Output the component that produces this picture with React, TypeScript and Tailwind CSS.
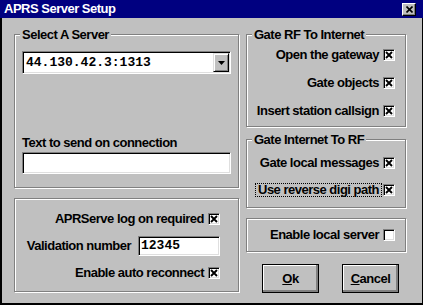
import type { ReactNode } from "react";

type GroupBoxProps = {
  label?: string;
  className?: string;
  children: ReactNode;
};

function GroupBox({ label, className, children }: GroupBoxProps) {
  return (
    <div
      className={
        "flex flex-col border border-[#808080] shadow-[inset_1px_1px_0_#fff,1px_1px_0_#fff] " + (className ?? "")
      }
    >
      {label ? <span className="-mt-[7px] ml-[5px] w-fit bg-[#c0c0c0] px-[2px] leading-[14px]">{label}</span> : null}
      {children}
    </div>
  );
}

function CheckBox({ checked }: { checked: boolean }) {
  return (
    <span className="flex h-[12px] w-[12px] shrink-0 items-center justify-center border border-b-white border-l-[#808080] border-r-white border-t-[#808080] bg-white shadow-[inset_1px_1px_0_#000,inset_-1px_-1px_0_#dfdfdf]">
      {checked ? (
        <svg width="8" height="8" viewBox="0 0 8 8">
          <path d="M1 1L7 7M7 1L1 7" stroke="#000" strokeWidth="1.9" />
        </svg>
      ) : null}
    </span>
  );
}

function CheckRow({ label, checked, focused }: { label: string; checked: boolean; focused?: boolean }) {
  return (
    <div className="flex h-[14px] items-center justify-end gap-[4px]">
      <span
        className={focused ? "-mr-[3px] border border-dotted border-black px-[2px] leading-[12px]" : "leading-[14px]"}
      >
        {label}
      </span>
      <CheckBox checked={checked} />
    </div>
  );
}

function Button({ children }: { children: ReactNode }) {
  return (
    <button
      className="flex h-[29px] w-[57px] items-center justify-center border border-black bg-[#c0c0c0] leading-[14px] shadow-[inset_-1px_-1px_0_#808080,inset_-2px_-2px_0_#808080,inset_1px_1px_0_#fff]"
      type="button"
    >
      {children}
    </button>
  );
}

export default function App() {
  return (
    <div className="flex h-[305px] w-[423px] flex-col bg-[#c0c0c0] font-['Liberation_Sans',Arial,sans-serif] text-[13px] font-bold tracking-[-0.5px] text-black">
      <div className="flex h-[18px] shrink-0 items-center justify-between bg-[#000080] pl-[4px] pr-[7px] text-white">
        <span className="leading-[14px]">APRS Server Setup</span>
        <span className="flex h-[13px] w-[14px] items-center justify-center border border-b-black border-l-white border-r-black border-t-white bg-[#c0c0c0] shadow-[inset_-1px_-1px_0_#808080]">
          <svg width="7" height="7" viewBox="0 0 7 7">
            <path d="M0.5 0.5L6.5 6.5M6.5 0.5L0.5 6.5" stroke="#000" strokeWidth="1.6" />
          </svg>
        </span>
      </div>

      <div className="flex flex-1 gap-[7px] border-b-2 border-l-2 border-r border-black pl-[12px] pt-[16px]">
        <div className="flex w-[225px] flex-col gap-[10px]">
          <GroupBox label="Select A Server" className="h-[154px]">
            <div className="flex flex-col px-[7px]">
              <div className="mt-[9px] flex h-[23px] border border-b-white border-l-[#808080] border-r-white border-t-[#808080] bg-white p-[1px] shadow-[inset_1px_1px_0_#000,inset_-1px_-1px_0_#dfdfdf]">
                <span className="flex-1 pl-[2px] font-['Liberation_Mono',monospace] text-[13px] leading-[19px] tracking-normal">
                  44.130.42.3:1313
                </span>
                <span className="flex w-[16px] items-center justify-center border border-b-black border-l-[#dfdfdf] border-r-black border-t-[#dfdfdf] bg-[#c0c0c0] shadow-[inset_1px_1px_0_#fff,inset_-1px_-1px_0_#808080]">
                  <svg width="7" height="4" viewBox="0 0 7 4">
                    <path d="M0 0H7L3.5 4Z" fill="#000" />
                  </svg>
                </span>
              </div>
              <span className="mt-[62px] leading-[14px]">Text to send on connection</span>
              <div className="mt-[2px] h-[22px] border border-b-white border-l-[#808080] border-r-white border-t-[#808080] bg-white shadow-[inset_1px_1px_0_#000,inset_-1px_-1px_0_#dfdfdf]" />
            </div>
          </GroupBox>

          <GroupBox className="h-[94px]">
            <div className="flex flex-col items-end pr-[18px] pt-[13px]">
              <CheckRow label="APRServe log on required" checked />
              <div className="mt-[10px] flex items-center gap-[7px]">
                <span className="leading-[14px]">Validation number</span>
                <div className="flex h-[20px] w-[82px] items-center border border-b-white border-l-[#808080] border-r-white border-t-[#808080] bg-white pl-[2px] font-['Liberation_Mono',monospace] text-[13px] leading-[16px] tracking-normal shadow-[inset_1px_1px_0_#000,inset_-1px_-1px_0_#dfdfdf]">
                  12345
                </div>
              </div>
              <div className="mt-[10px]">
                <CheckRow label="Enable auto reconnect" checked />
              </div>
            </div>
          </GroupBox>
        </div>

        <div className="flex w-[160px] flex-col">
          <GroupBox label="Gate RF To Internet" className="h-[93px]">
            <div className="mt-[6px] flex flex-col gap-[14px] pr-[10px]">
              <CheckRow label="Open the gateway" checked />
              <CheckRow label="Gate objects" checked />
              <CheckRow label="Insert station callsign" checked />
            </div>
          </GroupBox>

          <GroupBox label="Gate Internet To RF" className="mt-[12px] h-[69px]">
            <div className="mt-[9px] flex flex-col gap-[13px] pr-[10px]">
              <CheckRow label="Gate local messages" checked />
              <CheckRow label="Use reverse digi path" checked focused />
            </div>
          </GroupBox>

          <GroupBox className="mt-[10px] h-[34px]">
            <div className="pr-[10px] pt-[9px]">
              <CheckRow label="Enable local server" checked={false} />
            </div>
          </GroupBox>

          <div className="mt-[12px] flex gap-[23px] pl-[16px]">
            <Button>
              <span className="underline">O</span>k
            </Button>
            <Button>
              <span className="underline">C</span>ancel
            </Button>
          </div>
        </div>
      </div>
    </div>
  );
}
